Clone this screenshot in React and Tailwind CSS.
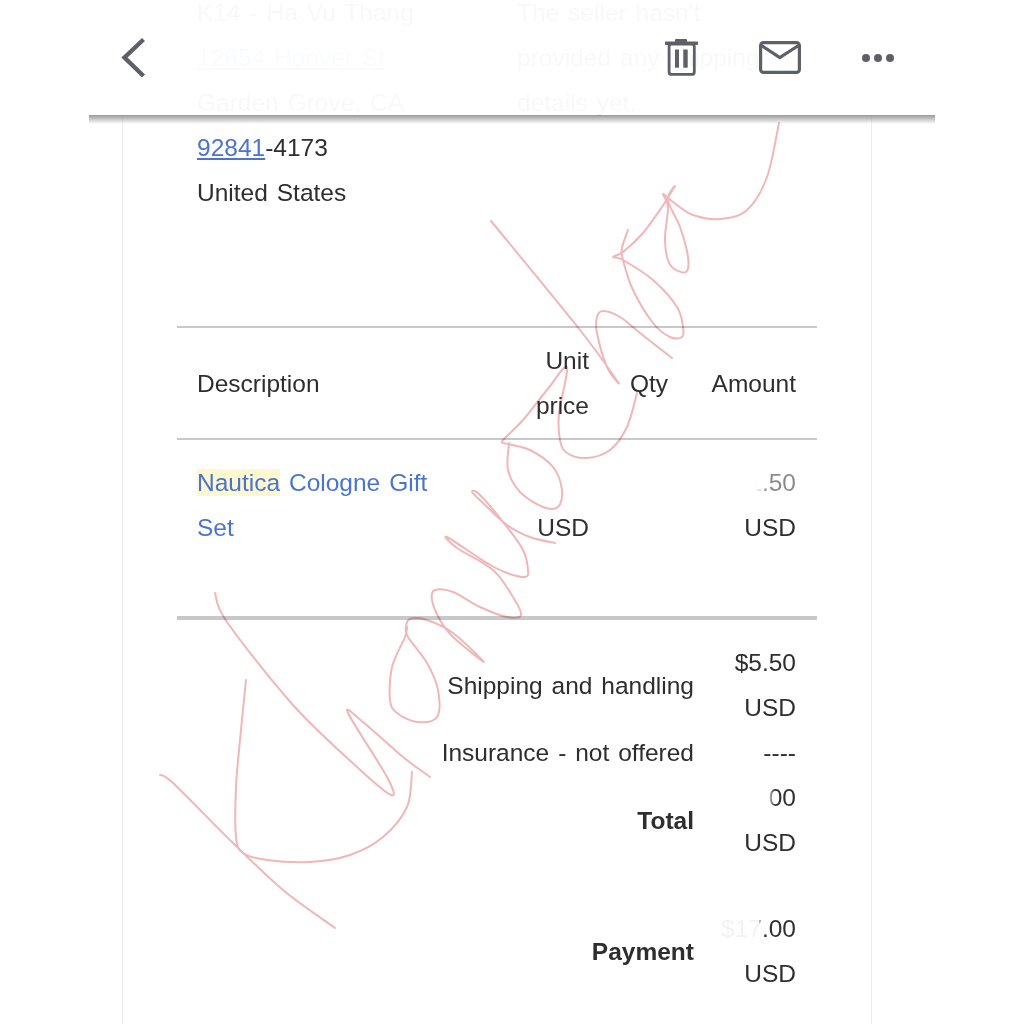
import React from 'react';

// signature strokes, page coordinates traced from the picture
const strokes = [
  [[779,123],[767,177],[747,210],[720,219],[693,215],[673,202],[663,194],[668,207],[665,237],[667,257],[673,268],[686,272],[688,257],[680,227],[668,200],[675,186],[662,207],[643,233],[623,252],[613,257],[623,260],[653,280],[677,307],[683,327],[682,337],[670,337],[653,323],[633,290],[623,260],[622,248],[628,230]],
  [[491,221],[580,330],[618,382],[607,367],[597,333],[597,317],[603,311],[620,317],[640,333],[672,358]],
  [[637,393],[627,427],[610,450],[587,458],[567,453],[560,440],[559,413],[567,367],[547,390],[523,420],[508,435],[502,442],[508,444],[530,450],[553,467],[562,490],[558,507],[543,507],[520,492],[508,470],[509,443]],
  [[555,543],[530,537],[507,525],[483,503],[472,492],[480,495],[507,527],[523,550],[528,570],[525,577],[507,573],[487,563],[447,537],[457,548],[493,570],[513,597],[521,615],[507,617],[480,607],[453,592],[435,590],[432,600],[440,620],[453,637],[484,662],[453,633],[427,620],[410,619],[406,627],[408,637],[427,663],[438,690],[437,717],[417,722],[397,713],[390,700],[392,667],[405,637],[407,627]],
  [[412,772],[407,807],[383,837],[350,855],[310,862],[267,860],[243,853],[236,837],[236,787],[240,740],[246,680]],
  [[215,593],[227,622],[293,705],[357,767],[391,795],[387,777],[348,713],[363,722],[403,757],[430,777]],
  [[160,775],[173,783],[233,843],[283,890],[335,928]],
];

const smooth = (pts) => {
  let d = `M${pts[0][0]} ${pts[0][1]}`;
  for (let i = 0; i < pts.length - 1; i++) {
    const p0 = pts[i - 1] || pts[i];
    const p1 = pts[i];
    const p2 = pts[i + 1];
    const p3 = pts[i + 2] || p2;
    const c1 = [p1[0] + (p2[0] - p0[0]) / 6, p1[1] + (p2[1] - p0[1]) / 6];
    const c2 = [p2[0] - (p3[0] - p1[0]) / 6, p2[1] - (p3[1] - p1[1]) / 6];
    d += ` C${c1[0]} ${c1[1]} ${c2[0]} ${c2[1]} ${p2[0]} ${p2[1]}`;
  }
  return d;
};

const Signature = () => (
  <svg className="absolute left-0 top-0 mix-blend-multiply" width="1024" height="1024" fill="none" stroke="#f0b6b8" strokeWidth="2" strokeLinecap="round" strokeLinejoin="round">
    {strokes.map((pts, i) => <path key={i} d={smooth(pts)} />)}
  </svg>
);

const TopBar = () => (
  <div className="absolute left-[89px] top-0 flex h-[115px] w-[846px] items-center bg-white/[0.97] pl-[32px] pr-[40px]">
    <svg width="28" height="42" viewBox="0 0 28 42" fill="none" stroke="#5d6066" strokeWidth="4.4">
      <path d="M22.5 2.5 L3.5 20.5 L22.5 39" />
    </svg>
    <svg className="ml-auto" width="34" height="38" viewBox="0 0 34 38" fill="#5d6066">
      <rect x="10" y="0" width="12" height="3.4" rx="1" />
      <rect x="0" y="2.4" width="33" height="3.6" rx="0.8" />
      <rect x="4.1" y="5" width="25.2" height="30.4" rx="2.5" fill="none" stroke="#5d6066" strokeWidth="2.8" />
      <rect x="10" y="10.5" width="4" height="18.2" />
      <rect x="18.3" y="10.5" width="4.4" height="18.2" />
    </svg>
    <svg className="ml-[60px]" width="42" height="33" viewBox="0 0 42 33" fill="none" stroke="#5d6066" strokeWidth="3.2">
      <rect x="1.6" y="1.6" width="38.8" height="29.8" rx="3" />
      <path d="M2.5 4.5 L20.8 16.5 L39.5 4.5" />
    </svg>
    <svg className="ml-[60px]" width="34" height="10" viewBox="0 0 34 10" fill="#5d6066">
      <circle cx="5" cy="5" r="4" />
      <circle cx="17" cy="5" r="4" />
      <circle cx="29" cy="5" r="4" />
    </svg>
    {/* soft edge under the bar */}
    <div className="absolute left-0 right-0 top-full h-[9px] bg-linear-to-b from-[#999999] to-transparent" />
  </div>
);

export default function App() {
  return (
    <div className="relative h-[1024px] overflow-hidden bg-white font-['Liberation_Sans',Arial,sans-serif] text-[24.5px] leading-[45px] text-[#2e2e2e] [word-spacing:2.1px]">
      <div className="-mt-[10px] ml-[122px] h-[1034px] w-[750px] border-x border-[#ededed] px-[54px]">
        {/* Addresses */}
        <div className="grid h-[336px] grid-cols-2">
          <div className="px-5">
            <div>K14 - Ha Vu Thang</div>
            <div className="text-[#4a74d0] underline">12654 Hoover St</div>
            <div>Garden Grove, CA</div>
            <div><span className="text-[#4a74d0] underline">92841</span>-4173</div>
            <div>United States</div>
          </div>
          <div className="px-5">
            The seller hasn't<br />provided any shipping<br />details yet.
          </div>
        </div>

        {/* Items */}
        <div className="grid grid-cols-[341px_91px_79px_129px] items-center border-y-2 border-[#c8c8c8] py-[10px]">
          <div className="px-5">Description</div>
          <div className="pr-5 text-right">Unit<br />price</div>
          <div className="pr-5 text-right">Qty</div>
          <div className="pr-[21px] text-right">Amount</div>
        </div>
        <div className="grid h-[176px] grid-cols-[341px_91px_79px_129px] items-start pt-[20px]">
          <div className="px-5 text-[#4a74d0]">
            <span className="bg-[#fdf8d0]">Nautica</span> Cologne Gift<br />Set
          </div>
          <div className="pr-5 text-right whitespace-nowrap">
            <span className="text-white">$11.50</span><br />USD
          </div>
          <div className="pr-5 text-right text-white">1</div>
          <div className="pr-[21px] text-right whitespace-nowrap">
            <span className="bg-linear-to-r from-white from-45% to-[#8a8a8a] to-60% bg-clip-text text-transparent">$11.50</span><br />USD
          </div>
        </div>

        {/* Totals */}
        <div className="border-t-4 border-[#c8c8c8] pt-[20px]">
          <div className="grid grid-cols-[537px_103px] items-center">
            <div className="px-5 text-right">Shipping and handling</div>
            <div className="pr-[21px] text-right whitespace-nowrap">$5.50<br />USD</div>
            <div className="px-5 text-right">Insurance - not offered</div>
            <div className="pr-[21px] text-right">----</div>
            <div className="px-5 text-right font-bold">Total</div>
            <div className="pr-[21px] text-right whitespace-nowrap">
              <span className="bg-linear-to-r from-white from-62% to-[#2e2e2e] to-72% bg-clip-text text-transparent">$17.00</span><br />USD
            </div>
            <div className="mt-[41px] px-5 text-right font-bold">Payment</div>
            <div className="mt-[41px] pr-[21px] text-right whitespace-nowrap">
              <span className="bg-linear-to-r from-[#f2f2f2] from-50% to-[#2e2e2e] to-55% bg-clip-text text-transparent">$17.00</span><br />USD
            </div>
          </div>
        </div>
      </div>
      <Signature />
      <TopBar />
    </div>
  );
}
